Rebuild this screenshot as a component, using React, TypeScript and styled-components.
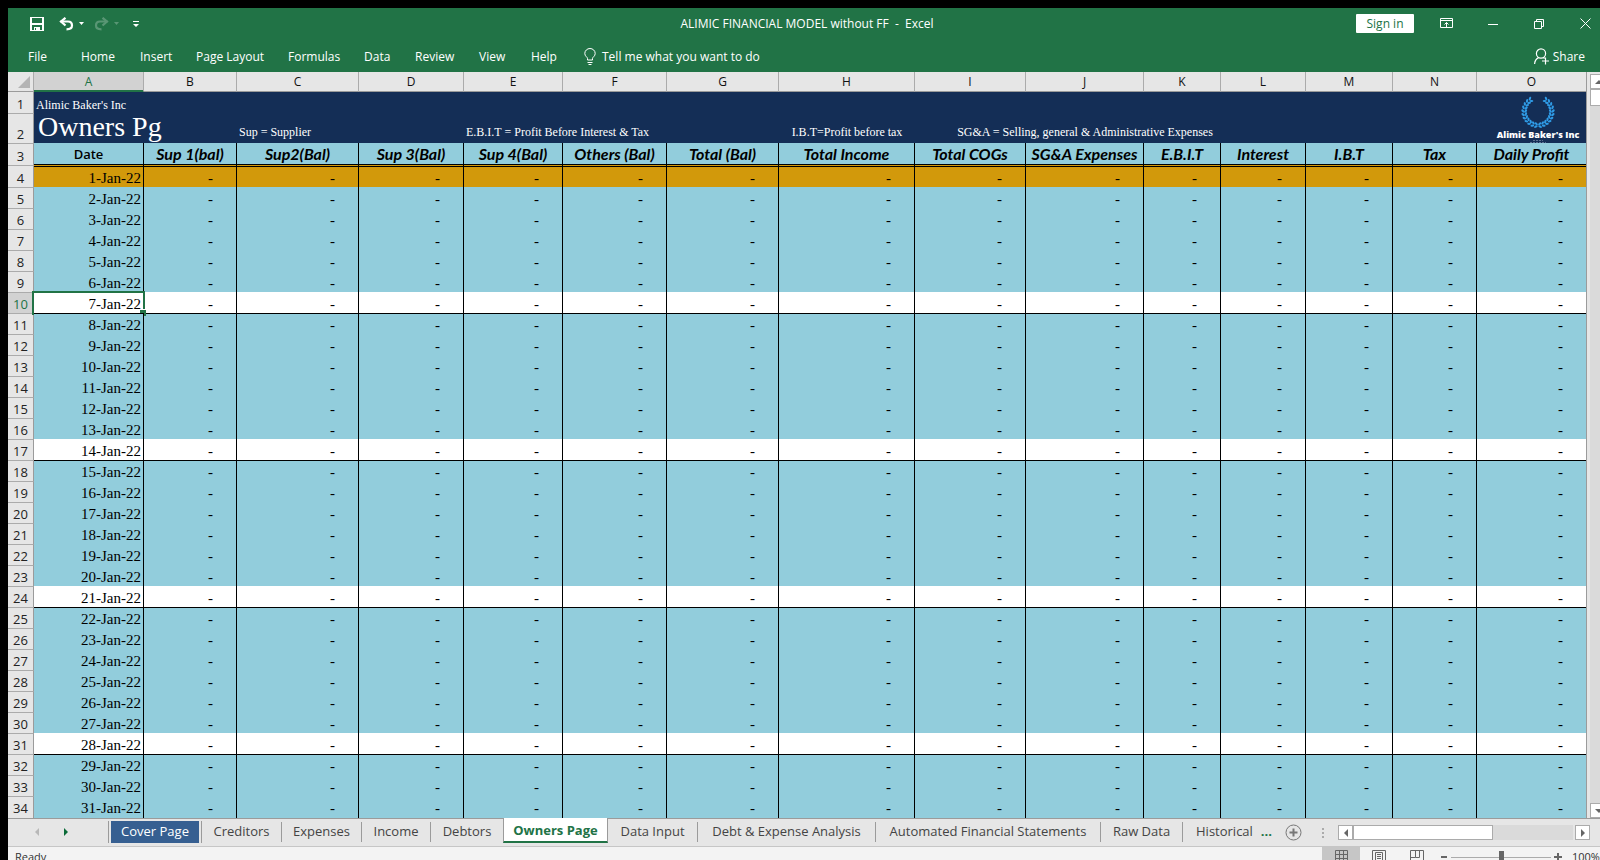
import React from 'react';
import styled, { createGlobalStyle, css } from 'styled-components';

const UI = '"Open Sans", "Noto Sans", sans-serif';
const SERIF = '"Liberation Serif", serif';
const GREEN = '#217346';
const NAVY = '#142e56';
const SKY = '#92cddc';
const GOLD = '#d2990b';

const GlobalStyle = createGlobalStyle`
  * { box-sizing: border-box; }
  body { margin: 0; background: #000; font-family: ${UI}; }
  button { font: inherit; color: inherit; background: none; border: 0; padding: 0; cursor: pointer; }
`;

const Window = styled.div`
  height: 100vh;
  padding: 8px 0 0 8px;
  overflow: hidden;
  display: flex;
  flex-direction: column;
`;

const Chrome = styled.header`
  background: ${GREEN};
  color: #fff;
  font-size: 12px;
  flex: 0 0 64px;
  display: flex;
  flex-direction: column;
`;

const TitleBar = styled.div`
  height: 31px;
  display: grid;
  grid-template-columns: 1fr auto 1fr;
  align-items: center;
`;

const QuickAccess = styled.div`
  display: flex;
  align-items: center;
  padding-left: 22px;
`;

const IconButton = styled.button<{ $w: number; $dim?: boolean }>`
  width: ${p => p.$w}px;
  height: 20px;
  display: flex;
  align-items: center;
  justify-content: flex-start;
  opacity: ${p => (p.$dim ? 0.25 : 1)};
`;

const Title = styled.div`
  padding-left: 6px;
  white-space: pre;
`;

const WindowControls = styled.div`
  display: flex;
  align-items: center;
  justify-content: flex-end;
  padding-right: 9px;
`;

const SignIn = styled.button`
  && {
    background: #fff;
    color: ${GREEN};
  }
  width: 58px;
  height: 19px;
  line-height: 19px;
  border-radius: 1px;
  margin-right: 26px;
`;

const Ribbon = styled.nav`
  flex: 1;
  display: flex;
  align-items: center;
  padding: 2px 15px 0 20px;
`;

const RibbonTab = styled.button<{ $w: number }>`
  width: ${p => p.$w}px;
  text-align: left;
  white-space: nowrap;
`;

const TellMe = styled.button`
  display: flex;
  align-items: center;
  gap: 6px;
`;

const Share = styled(TellMe)`
  margin-left: auto;
  gap: 4px;
`;

const Workspace = styled.main`
  flex: 1 1 0;
  min-height: 0;
  overflow: hidden;
  display: flex;
  background: #e6e6e6;
`;

const Grid = styled.table`
  width: 100%;
  table-layout: fixed;
  border-collapse: separate;
  border-spacing: 0;
  border-right: 1px solid #9b9b9b;
  th, td { padding: 0; overflow: visible; white-space: nowrap; }
  tbody tr:last-child > * { padding-bottom: 1px; }
`;

const GridArea = styled.div`
  flex: 1;
  min-width: 0;
  position: relative;
`;

const ColumnHead = styled.th<{ $active?: boolean }>`
  height: 20px;
  font-size: 12px;
  line-height: 16px;
  font-weight: 400;
  color: ${p => (p.$active ? GREEN : '#111')};
  background: ${p => (p.$active ? '#d2d2d2' : '#e6e6e6')};
  border-right: 1px solid #ababab;
  border-bottom: 1px solid ${p => (p.$active ? GREEN : '#9b9b9b')};
  box-shadow: ${p => (p.$active ? `inset 0 -1px ${GREEN}` : 'none')};
  &:last-child { border-right: 0; }
`;

const Corner = styled.td`
  background: #e6e6e6;
  border-right: 1px solid #ababab;
  border-bottom: 1px solid #9b9b9b;
  vertical-align: bottom;
  svg { display: block; margin: 0 3px 3px auto; }
`;

const RowHead = styled.th<{ $active?: boolean; $first?: boolean }>`
  font-size: 13px;
  line-height: 18px;
  font-weight: 400;
  vertical-align: bottom;
  color: ${p => (p.$active ? GREEN : '#222')};
  background: ${p => (p.$active ? '#d2d2d2' : '#e6e6e6')};
  border-right: 1px solid #9b9b9b;
  border-top: ${p => (p.$first ? '0' : '1px solid #ababab')};
`;

const BannerRow = styled.tr<{ $h: number }>`
  height: ${p => p.$h}px;
  td { background: ${NAVY}; color: #fff; font-family: ${SERIF}; vertical-align: bottom; text-align: left; }
`;

const Company = styled.div`
  font-size: 12px;
  line-height: 16px;
  padding-left: 2px;
`;

const SheetTitle = styled.div`
  font-size: 28px;
  line-height: 28px;
  padding: 0 0 2px 4px;
`;

const Legend = styled.div<{ $center?: boolean }>`
  display: flex;
  justify-content: ${p => (p.$center ? 'center' : 'flex-start')};
  padding-left: ${p => (p.$center ? 0 : 2)}px;
  font-size: 12px;
  line-height: 22px;
`;

const HeadingRow = styled.tr`
  height: 22px;
  td {
    background: ${SKY};
    border-right: 1px solid #000;
    border-bottom: 1px solid #000;
    text-align: center;
    font: italic 700 16px/20px Lato, sans-serif;
  }
  td:nth-child(2) { font: 600 13px/20px ${UI}; }
  td:last-child { border-right: 0; }
`;

type Tone = 'sky' | 'gold' | 'white';

const DataRow = styled.tr<{ $tone: Tone; $ruled: boolean; $h: number }>`
  height: ${p => p.$h}px;
  td {
    background: ${p => (p.$tone === 'white' ? '#fff' : SKY)};
    ${p =>
      p.$tone === 'gold' &&
      css`background: linear-gradient(to bottom, ${GOLD} 1px, #000 1px, #000 2px, ${GOLD} 2px);`}
    border-top: ${p => (p.$ruled ? '1px solid #000' : '0')};
    border-right: 1px solid #000;
    text-align: right;
    vertical-align: bottom;
    padding-right: 23px;
    font-family: ${SERIF};
    font-size: 15px;
    line-height: 18px;
    color: #000;
  }
  td:nth-child(2) { padding-right: 2px; position: relative; }
  td:last-child { border-right: 0; }
`;

const Selection = styled.div`
  position: absolute;
  inset: -1px -2px -2px -2px;
  border: 2px solid ${GREEN};
  &::after {
    content: '';
    position: absolute;
    right: -3px;
    bottom: -3px;
    width: 6px;
    height: 6px;
    background: ${GREEN};
    border-left: 1px solid #fff;
    border-top: 1px solid #fff;
  }
`;

const Logo = styled.div`
  position: absolute;
  top: 24px;
  right: 8px;
  width: 82px;
  display: flex;
  flex-direction: column;
  align-items: center;
  color: #fff;
  font: 800 9px/11px "Open Sans", sans-serif;
  white-space: nowrap;
`;

const VScroll = styled.div`
  flex: 0 0 13px;
  overflow: hidden;
  padding: 2px 0 0 3px;
  display: flex;
  flex-direction: column;
`;

const VTrack = styled.div`
  flex: 1;
  width: 17px;
  background: #dadada;
`;

const VButton = styled.button`
  && { background: #fff; border: 1px solid #ababab; }
  width: 17px;
  height: 15px;
  display: flex;
  align-items: center;
  justify-content: center;
  flex: none;
`;

const VThumb = styled.div`
  width: 17px;
  height: 17px;
  background: #fff;
  border: 1px solid #ababab;
`;

const TabStrip = styled.div`
  flex: 0 0 29px;
  background: #e6e6e6;
  border-top: 1px solid #9b9b9b;
  border-bottom: 1px solid #c6c6c6;
  display: flex;
  align-items: flex-start;
  font-size: 13px;
  color: #444;
`;

const TabNav = styled.div`
  flex: 0 0 100px;
  height: 26px;
  display: flex;
  align-items: center;
  padding-left: 25px;
  gap: 21px;
`;

const SheetTab = styled.button<{ $w: number; $kind?: 'cover' | 'active'; $noLine?: boolean }>`
  width: ${p => p.$w}px;
  height: 20px;
  margin-top: 3px;
  line-height: 18px;
  flex: none;
  white-space: nowrap;
  && {
    border-right: ${p => (p.$noLine ? '0' : '1px solid #9b9b9b')};
    ${p => p.$kind === 'cover' && css`
      height: 22px;
      margin-top: 2px;
      background: #365f91;
      background-clip: content-box;
      color: #fff;
      border-left: 1px solid #9b9b9b;
      padding: 0 2px;
    `}
    ${p => p.$kind === 'active' && css`
      height: 25px;
      margin-top: -1px;
      padding-top: 3px;
      background: #fff;
      color: ${GREEN};
      font-weight: 700;
      border-left: 1px solid #9b9b9b;
      border-bottom: 2px solid ${GREEN};
    `}
  }
`;

const TabLabel = styled.span`
  display: block;
  padding-bottom: 2px;
`;

const More = styled.span`
  color: ${GREEN};
  font-weight: 700;
  margin-left: 8px;
`;

const StripTools = styled.div`
  margin-left: auto;
  height: 27px;
  display: flex;
  align-items: center;
  padding-right: 12px;
`;

const PlainButton = styled.button`
  svg { display: block; }
`;

const HScroll = styled.div`
  display: flex;
  width: 252px;
  height: 15px;
  margin-left: 14px;
`;

const HButton = styled.button`
  && { background: #fff; border: 1px solid #ababab; }
  width: 15px;
  display: flex;
  align-items: center;
  justify-content: center;
`;

const HTrack = styled.div`
  flex: 1;
  background: #dadada;
  margin-right: 2px;
`;

const HThumb = styled.div`
  width: 140px;
  height: 15px;
  background: #fff;
  border: 1px solid #ababab;
`;

const StatusBar = styled.footer`
  flex: 0 0 13px;
  overflow: hidden;
  background: #f3f3f3;
  color: #333;
  font-size: 11px;
  line-height: 20px;
  display: flex;
  align-items: flex-start;
  padding-left: 7px;
`;

const ViewButton = styled.button<{ $on?: boolean }>`
  && { background: ${p => (p.$on ? '#c6c6c6' : 'transparent')}; }
  width: 38px;
  height: 22px;
  padding-top: 3px;
  display: flex;
  justify-content: center;
`;

const Views = styled.div`
  margin-left: auto;
  display: flex;
`;

const Zoom = styled.div`
  display: flex;
  padding-left: 4px;
  width: 136px;
`;

const Percent = styled.span`
  width: 28px;
`;

const columns: [string, number, string][] = [
  ['A', 110, 'Date'],
  ['B', 93, 'Sup 1(bal)'],
  ['C', 122, 'Sup2(Bal)'],
  ['D', 105, 'Sup 3(Bal)'],
  ['E', 99, 'Sup 4(Bal)'],
  ['F', 104, 'Others (Bal)'],
  ['G', 112, 'Total (Bal)'],
  ['H', 136, 'Total Income'],
  ['I', 111, 'Total COGs'],
  ['J', 118, 'SG&A Expenses'],
  ['K', 77, 'E.B.I.T'],
  ['L', 85, 'Interest'],
  ['M', 87, 'I.B.T'],
  ['N', 84, 'Tax'],
  ['O', 109, 'Daily Profit'],
];

const legends: Record<string, { text: string; center?: boolean }> = {
  C: { text: 'Sup = Supplier' },
  E: { text: 'E.B.I.T = Profit Before Interest & Tax' },
  H: { text: 'I.B.T=Profit before tax', center: true },
  J: { text: 'SG&A = Selling, general & Administrative Expenses', center: true },
};

const ribbonTabs: [string, number][] = [
  ['File', 53], ['Home', 59], ['Insert', 56], ['Page Layout', 92], ['Formulas', 76],
  ['Data', 51], ['Review', 64], ['View', 52], ['Help', 53],
];

const sheetTabs: { name: string; w: number; kind?: 'cover' | 'active'; noLine?: boolean }[] = [
  { name: 'Cover Page', w: 94, kind: 'cover' },
  { name: 'Creditors', w: 80 },
  { name: 'Expenses', w: 80 },
  { name: 'Income', w: 69 },
  { name: 'Debtors', w: 72, noLine: true },
  { name: 'Owners Page', w: 105, kind: 'active' },
  { name: 'Data Input', w: 90 },
  { name: 'Debt & Expense Analysis', w: 178 },
  { name: 'Automated Financial Statements', w: 225 },
  { name: 'Raw Data', w: 82 },
];

const Arrow = ({ d, fill = '#666' }: { d: 'l' | 'r' | 'u' | 'd'; fill?: string }) => {
  const paths = { l: 'M6 0V8L2 4Z', r: 'M2 0V8L6 4Z', u: 'M0 6H8L4 2Z', d: 'M0 2H8L4 6Z' };
  return <svg width="8" height="8" viewBox="0 0 8 8"><path d={paths[d]} fill={fill} /></svg>;
};

const Caret = () => <svg width="5" height="3" viewBox="0 0 5 3"><path d="M0 0H5L2.500 3Z" fill="#fff" /></svg>;

const UndoIcon = () => (
  <svg width="15" height="14" viewBox="0 0 15 14" fill="none" stroke="#fff" strokeWidth="2.200">
    <path d="M1.500 4.500H9C12 4.500 13 6.500 13 8.500S11.500 12.300 7.500 12.300" />
    <path d="M6.500 .8L2 4.500L6.500 8.500" />
  </svg>
);

const RedoIcon = () => (
  <svg width="15" height="14" viewBox="0 0 15 14" fill="none" stroke="#fff" strokeWidth="2.200">
    <path d="M13.500 4.500H6C3 4.500 2 6.500 2 8.500S3.500 12.300 7.500 12.300" />
    <path d="M8.500 .8L13 4.500L8.500 8.500" />
  </svg>
);

const Wreath = () => {
  const leaves = [];
  for (let i = 0; i < 11; i++) {
    const a = ((98 + i * 14) * Math.PI) / 180;
    for (const side of [-1, 1]) {
      for (const r of [12.4, 15.2]) {
        const x = 17 + side * -r * Math.cos(a);
        const y = 15.500 + r * Math.sin(a);
        const rot = side * (90 - (a * 180) / Math.PI + (r > 13 ? 35 : -35));
        leaves.push(
          <ellipse key={`${i}${side}${r}`} cx={x} cy={y} rx="1.900" ry="1.100" fill="#2f9be6" transform={`rotate(${rot} ${x} ${y})`} />,
        );
      }
    }
  }
  return <svg width="34" height="33" viewBox="0 0 34 33">{leaves}</svg>;
};

export default function App() {
  const days = Array.from({ length: 31 }, (_, i) => i + 1);
  return (
    <Window>
      <GlobalStyle />
      <Chrome>
        <TitleBar>
          <QuickAccess>
            <IconButton $w={29} aria-label="Save">
              <svg width="14" height="14" viewBox="0 0 14 14" fill="#fff" fillRule="evenodd">
                <path d="M0 0H14V14H0ZM2 1V6H12V1ZM2 8V13H4V10H10V13H12V8ZM5 11V13H6V11Z" />
              </svg>
            </IconButton>
            <IconButton $w={20} aria-label="Undo"><UndoIcon /></IconButton>
            <IconButton $w={15} aria-label="Undo history"><Caret /></IconButton>
            <IconButton $w={20} $dim aria-label="Redo"><RedoIcon /></IconButton>
            <IconButton $w={19} $dim aria-label="Redo history"><Caret /></IconButton>
            <IconButton $w={8} aria-label="Customize">
              <svg width="6" height="6" viewBox="0 0 6 6"><path d="M0 0H6V1H0ZM0 3H6L3 6Z" fill="#fff" /></svg>
            </IconButton>
          </QuickAccess>
          <Title>ALIMIC FINANCIAL MODEL without FF  -  Excel</Title>
          <WindowControls>
            <SignIn>Sign in</SignIn>
            <IconButton $w={48} aria-label="Ribbon options">
              <svg width="13" height="11" viewBox="0 0 13 11" fill="none" stroke="#fff"><path d="M.5 .5H12.500V9.500H.5ZM.5 2.500H12.500M6.500 9V4.500M4.500 6.500L6.500 4.500L8.500 6.500" /></svg>
            </IconButton>
            <IconButton $w={46} aria-label="Minimize">
              <svg width="10" height="10" viewBox="0 0 10 10"><path d="M0 5H10V6H0Z" fill="#fff" /></svg>
            </IconButton>
            <IconButton $w={46} aria-label="Restore">
              <svg width="10" height="10" viewBox="0 0 10 10" fill="none" stroke="#fff"><path d="M.5 2.500H7.500V9.500H.5ZM2.500 2.500V.5H9.500V7.500H7.500" /></svg>
            </IconButton>
            <IconButton $w={11} aria-label="Close">
              <svg width="11" height="11" viewBox="0 0 11 11" fill="none" stroke="#fff"><path d="M.5 .5L10.500 10.500M10.500 .5L.5 10.500" /></svg>
            </IconButton>
          </WindowControls>
        </TitleBar>
        <Ribbon>
          {ribbonTabs.map(([name, w]) => <RibbonTab key={name} $w={w}>{name}</RibbonTab>)}
          <TellMe>
            <svg width="12" height="17" viewBox="0 0 12 17" fill="none" stroke="#fff">
              <path d="M3.500 12V10.500C3.500 9 .8 8.300 .8 5.500A5.200 5 0 0 1 11.200 5.500C11.200 8.300 8.500 9 8.500 10.500V12ZM3.500 14.500H8.500M4.500 16.500H7.500" />
            </svg>
            Tell me what you want to do
          </TellMe>
          <Share>
            <svg width="15" height="17" viewBox="0 0 15 17" fill="none" stroke="#fff" strokeWidth="1.200">
              <circle cx="7" cy="5.500" r="4.600" />
              <path d="M.6 16C.8 12.500 2.500 10.600 4.500 9.600M9.500 9.500L10.500 10.500M11.500 9.500V16.500M8 13H15" />
            </svg>
            Share
          </Share>
        </Ribbon>
      </Chrome>

      <Workspace>
        <GridArea>
          <Grid>
            <colgroup>
              <col style={{ width: 26 }} />
              {columns.map(([l, w]) => <col key={l} style={{ width: w }} />)}
            </colgroup>
            <thead>
              <tr>
                <Corner><svg width="12" height="12" viewBox="0 0 12 12"><path d="M12 0V12H0Z" fill="#b4b4b4" /></svg></Corner>
                {columns.map(([l]) => <ColumnHead key={l} scope="col" $active={l === 'A'}>{l}</ColumnHead>)}
              </tr>
            </thead>
            <tbody>
              <BannerRow $h={21}>
                <RowHead scope="row" $first>1</RowHead>
                <td colSpan={15}><Company>Alimic Baker's Inc</Company></td>
              </BannerRow>
              <BannerRow $h={30}>
                <RowHead scope="row">2</RowHead>
                {columns.map(([l]) => (
                  <td key={l}>
                    {l === 'A' && <SheetTitle>Owners Pg</SheetTitle>}
                    {legends[l] && <Legend $center={legends[l].center}>{legends[l].text}</Legend>}
                  </td>
                ))}
              </BannerRow>
              <HeadingRow>
                <RowHead scope="row">3</RowHead>
                {columns.map(([l, , name]) => <td key={l}>{name}</td>)}
              </HeadingRow>
              {days.map(day => (
                <DataRow
                  key={day}
                  $tone={day === 1 ? 'gold' : day % 7 === 0 ? 'white' : 'sky'}
                  $ruled={day > 1 && day % 7 === 1}
                  $h={day === 1 || day === 31 ? 22 : 21}
                >
                  <RowHead scope="row" $active={day === 7}>{day + 3}</RowHead>
                  {columns.map(([l]) => (
                    <td key={l}>
                      {l === 'A' ? `${day}-Jan-22` : '-'}
                      {l === 'A' && day === 7 && <Selection />}
                    </td>
                  ))}
                </DataRow>
              ))}
            </tbody>
          </Grid>
          <Logo>
            <Wreath />
            Alimic Baker's Inc
            <svg width="16" height="3" viewBox="0 0 16 3" stroke="#5d7090" strokeDasharray="2 1">
              <path d="M3 .5H13M0 2.500H16" />
            </svg>
          </Logo>
        </GridArea>
        <VScroll>
          <VButton aria-label="Scroll up"><Arrow d="u" /></VButton>
          <VThumb />
          <VTrack />
          <VButton aria-label="Scroll down"><Arrow d="d" /></VButton>
        </VScroll>
      </Workspace>

      <TabStrip>
        <TabNav>
          <PlainButton aria-label="Previous sheet"><Arrow d="l" fill="#b8b8b8" /></PlainButton>
          <PlainButton aria-label="Next sheet"><Arrow d="r" fill="#0b6b38" /></PlainButton>
        </TabNav>
        {sheetTabs.map(t => (
          <SheetTab key={t.name} $w={t.w} $kind={t.kind} $noLine={t.noLine}>
            <TabLabel>{t.name}</TabLabel>
          </SheetTab>
        ))}
        <SheetTab $w={102} $noLine><TabLabel>Historical<More>...</More></TabLabel></SheetTab>
        <StripTools>
          <PlainButton aria-label="New sheet">
            <svg width="17" height="17" viewBox="0 0 17 17" fill="none" stroke="#777">
              <circle cx="8.500" cy="8.500" r="7.500" /><path d="M8.500 4.500V12.500M4.500 8.500H12.500" strokeWidth="2" />
            </svg>
          </PlainButton>
          <svg width="22" height="12" viewBox="0 0 22 12" fill="#ababab"><path d="M20 1H22V3H20ZM20 5H22V7H20ZM20 9H22V11H20Z" /></svg>
          <HScroll>
            <HButton aria-label="Scroll left"><Arrow d="l" /></HButton>
            <HTrack><HThumb /></HTrack>
            <HButton aria-label="Scroll right"><Arrow d="r" /></HButton>
          </HScroll>
        </StripTools>
      </TabStrip>

      <StatusBar>
        Ready
        <Views>
          <ViewButton $on aria-label="Normal view">
            <svg width="13" height="13" viewBox="0 0 13 13" fill="none" stroke="#666"><path d="M.5 .5H12.500V12.500H.5ZM.5 4.500H12.500M.5 8.500H12.500M4.500 .5V12.500M8.500 .5V12.500" /></svg>
          </ViewButton>
          <ViewButton aria-label="Page layout view">
            <svg width="14" height="13" viewBox="0 0 14 13" fill="none" stroke="#666"><path d="M.5 .5H13.500V12.500H.5ZM3.500 2.500H10.500V12.500H3.500ZM5 4.500H9M5 6.500H9M5 8.500H9" /></svg>
          </ViewButton>
          <ViewButton aria-label="Page break view">
            <svg width="14" height="13" viewBox="0 0 14 13" fill="none" stroke="#666"><path d="M.5 12.500V.5H13.500V12.500M5.500 .5V7.500H.5M9.500 .5V7.500H5.500" /></svg>
          </ViewButton>
        </Views>
        <Zoom>
          <svg width="124" height="13" viewBox="0 0 124 13" fill="#666">
            <path d="M1 9H7V11H1ZM114 9H122V11H114ZM117 6H119V13H117Z" />
            <path d="M11 10H111V11H11Z" fill="#ababab" />
            <path d="M59 4H64V13H59Z" />
          </svg>
        </Zoom>
        <Percent>100%</Percent>
      </StatusBar>
    </Window>
  );
}
